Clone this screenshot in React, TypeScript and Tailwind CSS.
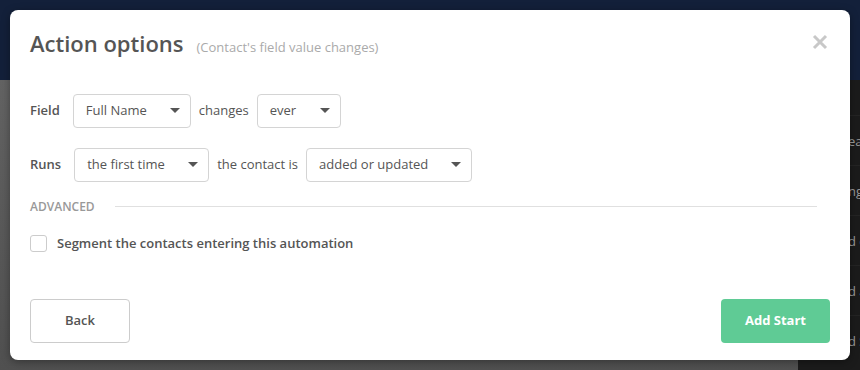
import React from "react";

function Select({ label, width }: { label: string; width: string }) {
  return (
    <div
      className={`flex h-[34px] items-center justify-between rounded-[4px] border border-[#d4d4d4] bg-white pl-[12px] pr-[10px] text-[13px] text-[#555] ${width}`}
    >
      <span>{label}</span>
      <svg width="10" height="5" viewBox="0 0 10 5">
        <path d="M0 0 L10 0 L5 5 Z" fill="#555" />
      </svg>
    </div>
  );
}

export default function App() {
  return (
    <div
      className="relative h-[370px] w-[860px] overflow-hidden"
      style={{ fontFamily: '"Open Sans", "Noto Sans", sans-serif' }}
    >
      {/* background */}
      <div className="flex h-full flex-col">
        <div className="h-[80px] bg-[#13203a]" />
        <div className="flex flex-1">
          <div className="flex-1 bg-gradient-to-b from-[#636363] to-[#505050]" />
          <div className="flex w-[62px] flex-col overflow-hidden whitespace-nowrap bg-[#1b1b1b] pl-[50px] pt-[35px] text-[13px] text-[#9a9a9a]">
            <div className="h-[50px] border-t border-[#242424] leading-[50px]">ea</div>
            <div className="h-[50px] border-t border-[#242424] leading-[50px]">ng</div>
            <div className="h-[50px] border-t border-[#242424] leading-[50px]">d e</div>
            <div className="h-[50px] border-t border-[#242424] leading-[50px]">d a</div>
            <div className="h-[50px] border-t border-[#242424] leading-[50px]">d S</div>
          </div>
        </div>
      </div>

      {/* modal */}
      <div className="absolute left-[10px] top-[10px] flex h-[350px] w-[840px] flex-col rounded-[8px] bg-white px-[20px] shadow-[0_2px_8px_rgba(0,0,0,0.35)]">
        <div className="flex items-center justify-between pt-[19px]">
          <div className="flex items-baseline gap-[13px]">
            <h1 className="text-[22px] font-semibold leading-[28px] text-[#555]">Action options</h1>
            <span className="text-[13px] text-[#aaa]">(Contact's field value changes)</span>
          </div>
          <svg width="16" height="16" viewBox="0 0 16 16" className="mr-[2px] mt-[-2px]">
            <path d="M2 2 L14 14 M14 2 L2 14" stroke="#c8c8c8" strokeWidth="3" strokeLinecap="butt" />
          </svg>
        </div>

        <div className="mt-[36px] flex items-center gap-[8px] text-[13px] text-[#555]">
          <span className="mr-[5px] font-semibold">Field</span>
          <Select label="Full Name" width="w-[118px]" />
          <span>changes</span>
          <Select label="ever" width="w-[84px]" />
        </div>

        <div className="mt-[20px] flex items-center gap-[8px] text-[13px] text-[#555]">
          <span className="mr-[5px] font-semibold">Runs</span>
          <Select label="the first time" width="w-[135px]" />
          <span>the contact is</span>
          <Select label="added or updated" width="w-[166px]" />
        </div>

        <div className="mt-[16px] flex items-center gap-[20px] pr-[13px]">
          <span className="text-[12px] font-semibold text-[#999]">ADVANCED</span>
          <div className="h-px flex-1 bg-[#e0e0e0]" />
        </div>

        <div className="mt-[18px] flex items-center gap-[10px]">
          <div className="h-[17px] w-[17px] rounded-[3px] border border-[#ccc] bg-white" />
          <span className="text-[13px] font-semibold text-[#555]">Segment the contacts entering this automation</span>
        </div>

        <div className="mt-auto mb-[17px] flex items-center justify-between">
          <button className="h-[44px] w-[100px] rounded-[4px] border border-[#ccc] bg-white text-[13px] font-semibold text-[#555]">
            Back
          </button>
          <button className="h-[44px] w-[109px] rounded-[4px] bg-[#5fcb95] text-[13px] font-bold text-white">
            Add Start
          </button>
        </div>
      </div>
    </div>
  );
}
